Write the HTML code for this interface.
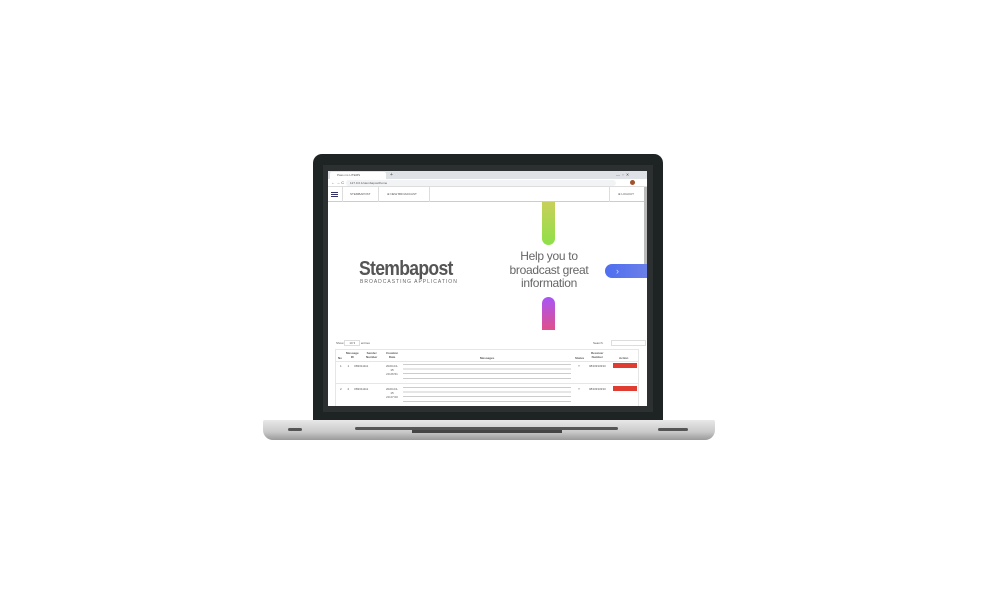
<!DOCTYPE html><html><head><style>
*{margin:0;padding:0;box-sizing:border-box}
body{width:1004px;height:591px;background:#fff;position:relative;overflow:hidden;font-family:"Liberation Sans",sans-serif}
.a{position:absolute}
.t{font-size:3px;color:#555;white-space:nowrap}
</style></head><body>
<div class="a" style="left:313px;top:154px;width:350px;height:268px;background:#1e2424;border-radius:9px 9px 0 0"></div>
<div class="a" style="left:323px;top:165px;width:330px;height:247px;background:#2c3030"></div>
<div class="a" style="left:328px;top:171px;width:319px;height:235px;background:#fff;overflow:hidden">
 <div class="a" style="left:0;top:0;width:319px;height:8px;background:#dee1e6"></div>
 <div class="a" style="left:2px;top:1px;width:56px;height:7px;background:#fff;border-radius:2px 2px 0 0"></div>
 <div class="a t" style="left:9px;top:2px">Pass ms LITEMS</div>
 <div class="a t" style="left:62px;top:1px;font-size:5px">+</div>
 <div class="a t" style="left:288px;top:1px;font-size:4px">—&nbsp;&nbsp;▫&nbsp;&nbsp;✕</div>
 <div class="a" style="left:0;top:8px;width:319px;height:8px;background:#fff;border-bottom:1px solid #ddd"></div>
 <div class="a t" style="left:3px;top:9px;font-size:4px">← → C</div>
 <div class="a" style="left:18px;top:9px;width:270px;height:6px;background:#f1f3f4;border-radius:3px"></div>
 <div class="a t" style="left:22px;top:10px">127.0.0.1/stembapost/home</div>
 <div class="a" style="left:302px;top:9px;width:5px;height:5px;border-radius:50%;background:#a0522d"></div>
 <div class="a" style="left:0;top:16px;width:319px;height:15px;background:#fff;border-bottom:1px solid #ccc"></div>
 <div class="a" style="left:3px;top:21px;width:7px;height:1px;background:#336;box-shadow:0 2px 0 #336,0 4px 0 #336"></div>
 <div class="a" style="left:14px;top:16px;width:1px;height:15px;background:#ddd"></div>
 <div class="a t" style="left:22px;top:21px">STEMBAPOST</div>
 <div class="a" style="left:50px;top:16px;width:1px;height:15px;background:#ddd"></div>
 <div class="a t" style="left:59px;top:21px">⊕ NEW BROADCAST</div>
 <div class="a" style="left:101px;top:16px;width:1px;height:15px;background:#ddd"></div>
 <div class="a" style="left:281px;top:16px;width:1px;height:15px;background:#ddd"></div>
 <div class="a t" style="left:290px;top:21px">⊕ LOGOUT</div>
 <div class="a" style="left:316px;top:16px;width:3px;height:80px;background:#bbb"></div>
 <div class="a" style="left:214px;top:31px;width:13px;height:43px;background:linear-gradient(#c8d05a,#8ee04a);border-radius:0 0 7px 7px"></div>
 <div class="a" style="left:214px;top:126px;width:13px;height:33px;background:linear-gradient(#a855f7,#e0508a);border-radius:7px 7px 0 0"></div>
 <div class="a" style="left:31px;top:87px;font-size:20px;font-weight:bold;color:#555;letter-spacing:-0.8px;transform:scaleX(0.88);transform-origin:0 0">Stembapost</div>
 <div class="a" style="left:32px;top:108px;font-size:5px;color:#666;letter-spacing:1px">BROADCASTING APPLICATION</div>
 <div class="a" style="left:176px;top:79px;width:90px;text-align:center;font-size:12px;line-height:13.5px;color:#666;letter-spacing:-0.3px">Help you to broadcast great information</div>
 <div class="a" style="left:277px;top:93px;width:42px;height:14px;background:linear-gradient(90deg,#4f6ef0,#6a7fe8);border-radius:7px 0 0 7px;color:#cde;font-size:9px;line-height:14px;padding-left:11px">›</div>
 <div class="a t" style="left:8px;top:170px">Show <span style="border:1px solid #ddd;padding:0 4px">10 ▾</span> entries</div>
 <div class="a t" style="left:265px;top:170px">Search:</div>
 <div class="a" style="left:283px;top:169px;width:35px;height:6px;border:1px solid #ddd"></div>
 <div class="a" style="left:7px;top:178px;width:304px;height:60px;border:1px solid #e6e6e6"></div>
 <div class="a t" style="left:10px;top:185px;font-weight:bold">No</div>
 <div class="a t" style="left:18px;top:180px;font-weight:bold;text-align:center">Message<br>ID</div>
 <div class="a t" style="left:38px;top:180px;font-weight:bold;text-align:center">Sender<br>Number</div>
 <div class="a t" style="left:58px;top:180px;font-weight:bold;text-align:center">Creation<br>Date</div>
 <div class="a t" style="left:152px;top:185px;font-weight:bold">Messages</div>
 <div class="a t" style="left:247px;top:185px;font-weight:bold">Status</div>
 <div class="a t" style="left:263px;top:180px;font-weight:bold;text-align:center">Receiver<br>Number</div>
 <div class="a t" style="left:291px;top:185px;font-weight:bold">Action</div>
 <div class="a" style="left:7px;top:190px;width:304px;height:1px;background:#e6e6e6"></div>
 <div class="a" style="left:7px;top:212px;width:304px;height:1px;background:#e6e6e6"></div>
 <div class="a t" style="left:12px;top:193px">1&nbsp;&nbsp;&nbsp;&nbsp;&nbsp;&nbsp;&nbsp;1&nbsp;&nbsp;&nbsp;&nbsp;&nbsp;&nbsp;083311111</div>
 <div class="a t" style="left:12px;top:216px">2&nbsp;&nbsp;&nbsp;&nbsp;&nbsp;&nbsp;&nbsp;2&nbsp;&nbsp;&nbsp;&nbsp;&nbsp;&nbsp;083311111</div>
 <div class="a t" style="left:58px;top:193px;text-align:center">2020-04-<br>15<br>20:26:51</div>
 <div class="a t" style="left:58px;top:216px;text-align:center">2020-04-<br>15<br>20:27:00</div>
 <div class="a" style="left:75px;top:192px;width:168px;height:18px;background:repeating-linear-gradient(#fff 0 1px,#ccc 1px 2px,#fff 2px 4.6px)"></div>
 <div class="a" style="left:75px;top:215px;width:168px;height:18px;background:repeating-linear-gradient(#fff 0 1px,#ccc 1px 2px,#fff 2px 4.6px)"></div>
 <div class="a t" style="left:250px;top:193px">Y</div>
 <div class="a t" style="left:250px;top:216px">Y</div>
 <div class="a t" style="left:261px;top:193px">0833333333</div>
 <div class="a t" style="left:261px;top:216px">0833333333</div>
 <div class="a" style="left:285px;top:192px;width:24px;height:5px;background:#e03c31"></div>
 <div class="a" style="left:285px;top:215px;width:24px;height:5px;background:#e03c31"></div>
</div>
<div class="a" style="left:263px;top:420px;width:452px;height:20px;background:linear-gradient(#e8e8e8,#c9c9c9 60%,#9a9a9a);border-radius:2px 2px 10px 10px"></div>
<div class="a" style="left:355px;top:427px;width:263px;height:3px;background:#555;border-radius:2px"></div>
<div class="a" style="left:412px;top:430px;width:150px;height:3px;background:#444"></div>
<div class="a" style="left:288px;top:428px;width:14px;height:3px;background:#555;border-radius:2px"></div>
<div class="a" style="left:658px;top:428px;width:30px;height:3px;background:#555;border-radius:2px"></div>
</body></html>
